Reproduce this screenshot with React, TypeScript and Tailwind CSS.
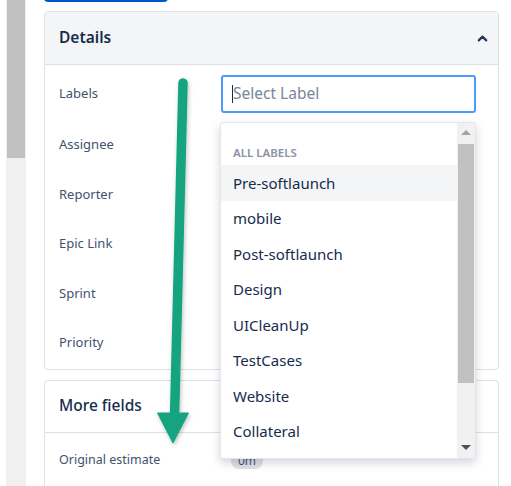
import React from 'react';
import { ChevronUp } from 'lucide-react';

const font = { fontFamily: `'Noto Sans', 'Liberation Sans', sans-serif` };

const fieldRows = ['Assignee', 'Reporter', 'Epic Link', 'Sprint', 'Priority'];

const labelOptions = [
    'Pre-softlaunch',
    'mobile',
    'Post-softlaunch',
    'Design',
    'UICleanUp',
    'TestCases',
    'Website',
    'Collateral',
];

// Label picker menu, opened under the input
const LabelMenu = () => (
    <div className="absolute left-[220px] top-[122px] w-[256px] h-[337px] bg-white border border-[#e4e6ea] rounded-[3px] shadow-[0_4px_10px_rgba(9,30,66,0.18)] flex overflow-hidden">
        <div className="flex-1 flex flex-col">
            <div className="pt-[22px] pb-[5px] pl-[12px] text-[11.5px] leading-[15px] font-semibold text-[#8993a4] uppercase">
                All labels
            </div>
            {labelOptions.map((option, index) => (
                <div
                    key={option}
                    className={`h-[35.5px] flex items-center pl-[12px] text-[15px] text-[#172b4d] ${index === 0 ? 'bg-[#f4f5f7]' : ''}`}
                >
                    {option}
                </div>
            ))}
        </div>
        <div className="w-[18px] bg-[#f1f1f1] flex flex-col">
            <div className="h-[18px] flex items-center justify-center">
                <div className="w-0 h-0 border-l-[5px] border-r-[5px] border-b-[5px] border-l-transparent border-r-transparent border-b-[#a3a3a3]" />
            </div>
            <div className="mt-[3px] h-[239px] bg-[#c1c1c1] mx-[1px]" />
            <div className="flex-1" />
            <div className="h-[18px] flex items-center justify-center mb-[2px]">
                <div className="w-0 h-0 border-l-[5px] border-r-[5px] border-t-[5px] border-l-transparent border-r-transparent border-t-[#505050]" />
            </div>
        </div>
    </div>
);

// Green annotation arrow drawn over the fields
const PointerArrow = () => (
    <svg className="absolute left-0 top-0 pointer-events-none" width="511" height="486" viewBox="0 0 511 486">
        <defs>
            <filter id="arrow-shadow" x="-50%" y="-10%" width="200%" height="120%">
                <feDropShadow dx="1" dy="2" stdDeviation="2" floodColor="#000" floodOpacity="0.25" />
            </filter>
        </defs>
        <g filter="url(#arrow-shadow)" fill="#14a480" stroke="#14a480">
            <line x1="183" y1="83" x2="174.5" y2="418" strokeWidth="9.5" strokeLinecap="round" />
            <polygon points="157.5,413 188.5,413 173,443" strokeWidth="1" strokeLinejoin="round" />
        </g>
    </svg>
);

export default function App() {
    return (
        <div className="relative w-[511px] h-[486px] overflow-hidden bg-white flex" style={font}>
            {/* page scrollbar */}
            <div className="ml-[6px] w-[20px] h-full bg-[#f0f0f0]">
                <div className="mx-[1px] h-[158px] bg-[#c1c1c1]" />
            </div>

            <div className="ml-[18px] w-[455px] flex flex-col">
                <div className="-mt-[30px] w-[124px] h-[32px] shrink-0 bg-[#0052cc] rounded-[4px]" />

                {/* Details panel */}
                <div className="mt-[9px] shrink-0 border border-[#dfe1e6] rounded-[4px] overflow-hidden">
                    <div className="h-[53px] bg-[#f4f5f7] border-b border-[#dfe1e6] flex items-center justify-between pl-[14px] pr-[8px]">
                        <span className="text-[15.5px] font-semibold text-[#172b4d]">Details</span>
                        <ChevronUp size={15} strokeWidth={3.5} className="text-[#253858]" />
                    </div>
                    <div className="pt-[10px] pb-[1px]">
                        <div className="h-[38px] flex items-center">
                            <span className="w-[176px] pl-[14px] text-[13px] text-[#42526e]">Labels</span>
                            <div className="w-[255px] h-[38px] border-2 border-[#4c9aff] rounded-[3px] flex items-center pl-[9px]">
                                <span className="w-px h-[18px] bg-[#172b4d]" />
                                <span className="text-[15.5px] text-[#7a869a]">Select Label</span>
                            </div>
                        </div>
                        <div className="mt-[7px]">
                            {fieldRows.map((row) => (
                                <div key={row} className="h-[49.5px] flex items-center">
                                    <span className="w-[176px] pl-[14px] text-[13px] text-[#42526e]">{row}</span>
                                </div>
                            ))}
                        </div>
                    </div>
                </div>

                {/* More fields panel */}
                <div className="mt-[10px] shrink-0 border border-[#dfe1e6] rounded-[4px] h-[140px]">
                    <div className="h-[52px] border-b border-[#dfe1e6] flex items-center pl-[14px]">
                        <span className="text-[15.5px] font-medium text-[#172b4d]">More fields</span>
                    </div>
                    <div className="h-[56px] flex items-center">
                        <span className="w-[186px] pl-[14px] text-[12.5px] text-[#42526e]">Original estimate</span>
                        <span className="px-[7px] h-[16px] rounded-full bg-[#dfe1e6] text-[12px] leading-[16px] text-[#42526e]">0m</span>
                    </div>
                </div>
            </div>

            <LabelMenu />
            <PointerArrow />
        </div>
    );
}
